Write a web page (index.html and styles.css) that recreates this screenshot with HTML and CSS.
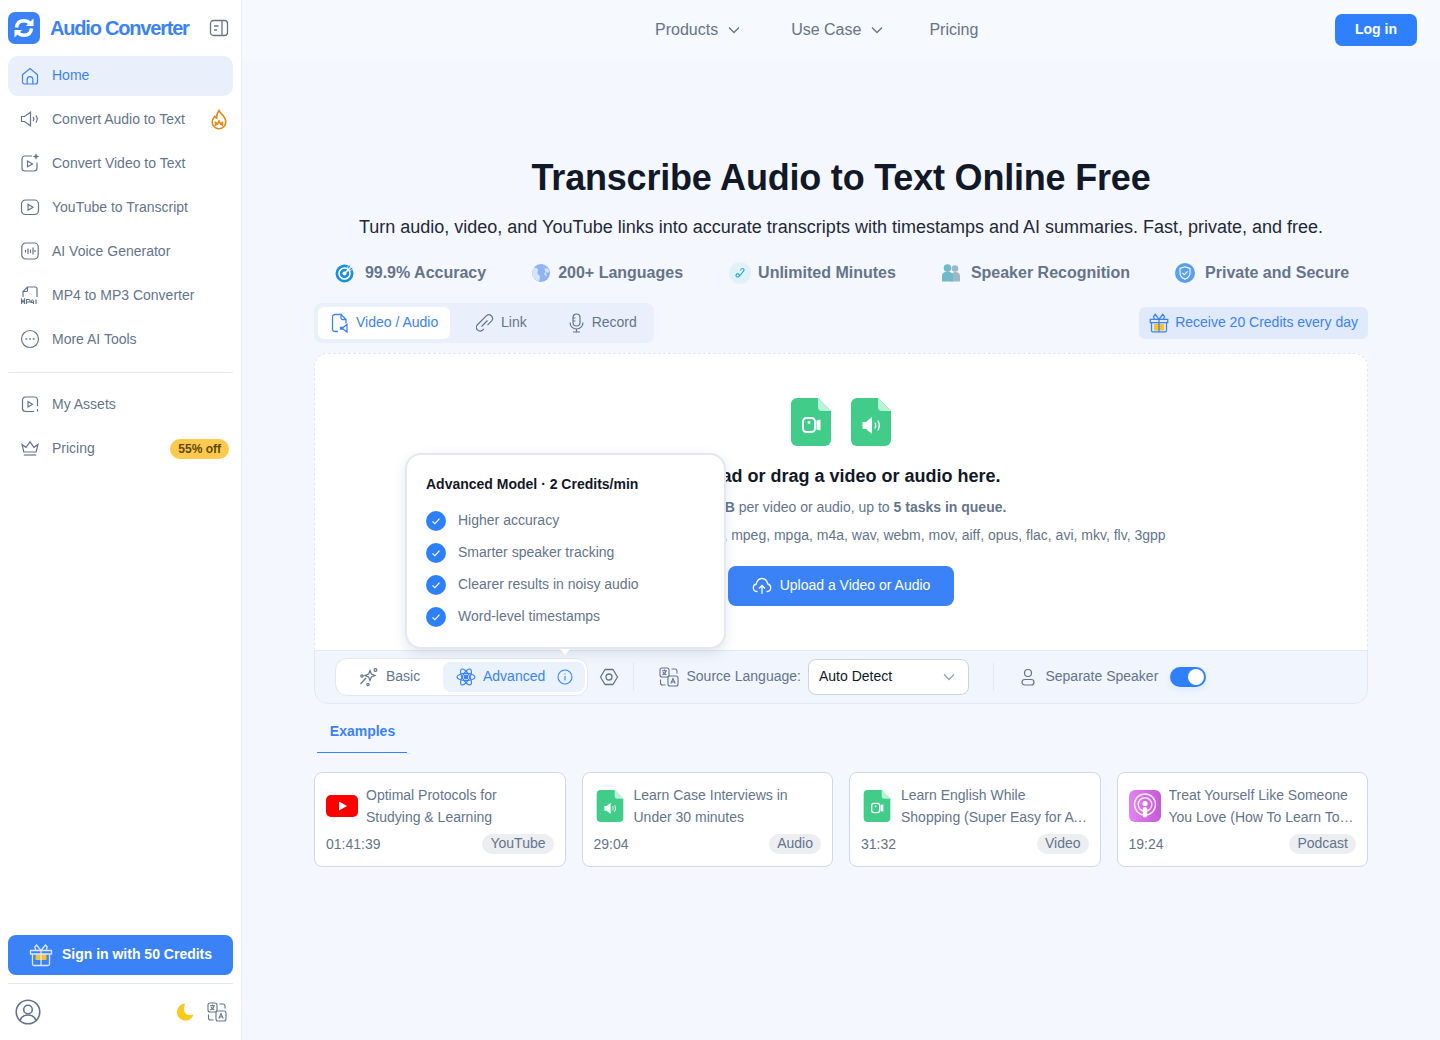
FILE: index.html
```html
<!DOCTYPE html>
<html lang="en">
<head>
<meta charset="utf-8">
<title>Audio Converter</title>
<link rel="stylesheet" href="styles.css">
</head>
<body>
<div class="app">
  <aside class="sidebar">
    <div class="brand">
      <span class="logo">
        <svg width="32" height="32" viewBox="0 0 32 32" fill="none"><path d="M8.500 15.500C9 11 12 8.700 16 8.700c2.600 0 4.600 1 6 2.600" stroke="#fff" stroke-width="3.400"/><path d="M25.500 6.500v7.600h-7.600z" fill="#fff"/><path d="M23.500 16.500C23 21 20 23.300 16 23.300c-2.600 0-4.600-1-6-2.600" stroke="#fff" stroke-width="3.400"/><path d="M6.500 25.500v-7.600h7.600z" fill="#fff"/></svg>
      </span>
      <span class="brand-name">Audio Converter</span>
      <svg class="collapse" width="20" height="20" viewBox="0 0 20 20" fill="none" stroke="#64748b" stroke-width="1.300"><rect x="1.500" y="2.500" width="17" height="15" rx="3"/><path d="M13 2.500v15M5 8h4.500M5 12h3"/></svg>
    </div>
    <nav class="nav nav-main">
      <a class="nav-item active"><svg class="nav-icon" viewBox="0 0 20 20" fill="none" stroke="currentColor" stroke-width="1.200"><path d="M2.500 8.800 10 2.600l7.500 6.200v7.200a2 2 0 0 1-2 2h-11a2 2 0 0 1-2-2z"/><path d="M7.200 18v-4.500a2.800 2.800 0 0 1 5.600 0V18"/></svg><span class="lift">Home</span></a>
      <a class="nav-item"><svg class="nav-icon" viewBox="0 0 20 20" fill="none" stroke="currentColor" stroke-width="1.200"><path d="M1.500 7.500h3L10.500 3.200v13.600L4.500 12.500h-3z"/><path d="M13 8a3 3 0 0 1 0 4M15.800 6.500a5.500 5.500 0 0 1 0 7"/></svg><span class="grow">Convert Audio to Text</span><svg class="badge-fire" width="20" height="22" viewBox="0 0 20 22" fill="none" stroke="#e08a1e" stroke-width="1.600"><path d="M10 1.500c1 3 6.800 5.800 6.800 11.500a6.800 6.800 0 0 1-13.600 0c0-3 1.600-4.500 2.600-5.700.5 1.200 1 1.700 1.800 2C7.500 6.500 8.500 3.500 10 1.500z"/><path d="M6.500 17v-3.500l2 1.500 1.500-3 1.500 3 2-1.500V17"/></svg></a>
      <a class="nav-item"><svg class="nav-icon" viewBox="0 0 20 20" fill="none" stroke="currentColor" stroke-width="1.200"><path d="M12 3H5a3 3 0 0 0-3 3v9a3 3 0 0 0 3 3h9a3 3 0 0 0 3-3V9.500"/><path d="M7.500 8v5.800l5-2.900z"/><path d="M16 0l.9 2.600 2.600.9-2.600.9-.9 2.600-.9-2.600-2.600-.9 2.600-.9z" fill="currentColor" stroke="none"/></svg><span>Convert Video to Text</span></a>
      <a class="nav-item"><svg class="nav-icon" viewBox="0 0 20 20" fill="none" stroke="currentColor" stroke-width="1.200"><rect x="1.500" y="3" width="17" height="14.500" rx="4"/><path d="M8 7.300v6l5-3z"/></svg><span>YouTube to Transcript</span></a>
      <a class="nav-item"><svg class="nav-icon" viewBox="0 0 20 20" fill="none" stroke="currentColor" stroke-width="1.200"><rect x="1.800" y="2" width="16.400" height="16" rx="4"/><path d="M5.500 9v2.500M8 7.500v5.500M10.500 8.500v3.500M13 6.500v7M15 9v2"/></svg><span>AI Voice Generator</span></a>
      <a class="nav-item"><svg class="nav-icon" viewBox="0 0 20 20" fill="none" stroke="currentColor" stroke-width="1.200"><path d="M3 12V6.500L7.500 2H15a2 2 0 0 1 2 2v8"/><path d="M3 6.500h3.500a1 1 0 0 0 1-1V2"/><path d="M1.500 19v-4.500l1.500 2.500 1.500-2.500V19M6.500 19v-4.500h2.300a1.200 1.200 0 0 1 0 2.500H6.500M12.500 14.500 11 17.500h3M13.500 15.500V19M16 14.500V19"/></svg><span>MP4 to MP3 Converter</span></a>
      <a class="nav-item"><svg class="nav-icon" viewBox="0 0 20 20" fill="none" stroke="currentColor" stroke-width="1.200"><circle cx="10" cy="10" r="8.500"/><path d="M6 10h.6M9.700 10h.6M13.400 10h.6" stroke-width="1.600" stroke-linecap="round"/></svg><span>More AI Tools</span></a>
    </nav>
    <div class="rule"></div>
    <nav class="nav">
      <a class="nav-item"><svg class="nav-icon" viewBox="0 0 20 20" fill="none" stroke="currentColor" stroke-width="1.200"><path d="M17.500 12V6a3 3 0 0 0-3-3h-9a3 3 0 0 0-3 3v8.500a3 3 0 0 0 3 3H14"/><path d="M8 7.500v5.500l4.500-2.700z"/><path d="M17.500 15v2.500"/></svg><span>My Assets</span></a>
      <a class="nav-item"><svg class="nav-icon" viewBox="0 0 20 20" fill="none" stroke="currentColor" stroke-width="1.200"><path d="M2 6.500l4 2.800L10 3.800l4 5.500 4-2.800-1.800 7.500H3.800z"/><path d="M3.800 17h12.400"/></svg><span class="grow">Pricing</span><span class="off">55% off</span></a>
    </nav>
    <div class="spacer"></div>
    <button class="signin">
      <svg width="24" height="24" viewBox="0 0 24 24" fill="none" stroke="#dbe8ff" stroke-width="1.300"><rect x="6.500" y="11" width="11" height="6" fill="#f4c430" stroke="none"/><path d="M1.500 7.500h21v3.500h-21zM3.500 11v10a1.500 1.500 0 0 0 1.500 1.500h14a1.500 1.500 0 0 0 1.500-1.500V11M12 7.500v15M12 7.500 7.500 2 5.800 4l1 3.500M12 7.500 16.500 2l1.700 2-1 3.500"/></svg>
      <span class="lift">Sign in with 50 Credits</span>
    </button>
    <div class="rule rule-bottom"></div>
    <div class="side-foot">
      <svg width="26" height="26" viewBox="0 0 26 26" fill="none" stroke="#64748b" stroke-width="1.600"><circle cx="13" cy="13" r="11.800"/><circle cx="13" cy="10.500" r="4.300"/><path d="M5 22c1-4 4-6 8-6s7 2 8 6"/></svg>
      <span class="grow"></span>
      <svg class="moon" width="18" height="18" viewBox="0 0 18 18"><path d="M9.500.6a8.500 8.500 0 1 0 8 11c-3 1.600-7.300.6-8.800-2.500C7.400 6.200 8 3 9.500.6z" fill="#fdc91c"/></svg>
      <svg width="20" height="20" viewBox="0 0 20 20" fill="none" stroke="#64748b" stroke-width="1.100"><rect x="1" y="1" width="9" height="9" rx="2"/><rect x="9" y="9" width="10" height="10" rx="2" fill="#fff"/><path d="M3 3.800h5M5.500 2.600v1.200M7 3.800c-.4 1.800-2 3.500-3.700 4M4 5c.6 1.300 2 2.600 3.400 2.800M11.800 16.500 14 11.500l2.200 5M12.600 15h2.800M12.500 2H16a2 2 0 0 1 2 2v2.500M1.500 12.500V16a2 2 0 0 0 2 2h3"/></svg>
    </div>
  </aside>

  <div class="main">
    <header class="topbar">
      <div class="topnav">
        <a class="topnav-item topnav-first">Products<svg width="14" height="14" viewBox="0 0 14 14" fill="none" stroke="#64748b" stroke-width="1.300"><path d="M2 4.500l5 5 5-5"/></svg></a>
        <a class="topnav-item topnav-second">Use Case<svg width="14" height="14" viewBox="0 0 14 14" fill="none" stroke="#64748b" stroke-width="1.300"><path d="M2 4.500l5 5 5-5"/></svg></a>
        <a class="topnav-item">Pricing</a>
      </div>
      <button class="login">Log in</button>
    </header>

    <main class="content">
      <h1 class="title">Transcribe Audio to Text Online Free</h1>
      <p class="subtitle">Turn audio, video, and YouTube links into accurate transcripts with timestamps and AI summaries. Fast, private, and free.</p>
      <ul class="features">
        <li class="feature feature-wide"><svg width="20" height="20" viewBox="0 0 20 20" fill="none"><circle cx="9.500" cy="10.500" r="9" fill="#1a8fe0"/><circle cx="9.500" cy="10.500" r="5.500" stroke="#fff" stroke-width="1.600"/><circle cx="9.500" cy="10.500" r="2" fill="#fff"/><path d="M15 1.500l.5 2.800 2.800.5L16 7.500l-3-.7-.5-3z" fill="#1a8fe0" stroke="#f4f7fd" stroke-width=".8"/><path d="M9.500 10.500 15.500 4.500" stroke="#fff" stroke-width="1.600"/></svg><span>99.9% Accuracy</span></li>
        <li class="feature"><svg width="18" height="18" viewBox="0 0 18 18"><circle cx="9" cy="9" r="9" fill="#8db4f5"/><path d="M1.500 4c2-.5 4 0 4.500 1.500S5 8 5.500 9.500 8 11 8 13s-1 3.500-1.500 4.500C3 16 .2 13 .2 9c0-2 .3-3.500 1.300-5zM11 .5c1 1 0 2.500 1 3.500s3 0 4 1 1.500 3 .5 3.500-3-.5-4 .5 1 3 2.500 3.500" fill="#f4f7fd" fill-opacity=".7"/></svg><span>200+ Languages</span></li>
        <li class="feature feature-mid"><svg width="22" height="22" viewBox="0 0 22 22" fill="none"><circle cx="11" cy="11" r="11" fill="#e2f1f8"/><path d="M13.500 6.500c1.200 0 2 1.300 1.200 2.500l-4.500 5.300c-1 1.200-3 .8-3.200-.6-.2-1.400 1.200-2.400 2.400-1.800 1 .4 1.100 1.600 1 2.600M13.500 6.500c-1 0-1.800.8-2 2" stroke="#2ab0c8" stroke-width="1.200"/></svg><span>Unlimited Minutes</span></li>
        <li class="feature feature-wide feature-tight"><svg width="20" height="20" viewBox="0 0 20 20"><circle cx="14" cy="5.500" r="3.300" fill="#9bb9c4"/><path d="M10 18.500V13c0-2.500 2-4 4.500-4s4.500 1.500 4.500 4v5.500z" fill="#9bb9c4"/><circle cx="6.500" cy="5" r="3.800" fill="#6fb9ca"/><path d="M1 18.500V13c0-3 2.500-4.500 5.500-4.500S12 10 12 13v5.500z" fill="#6fb9ca"/></svg><span>Speaker Recognition</span></li>
        <li class="feature feature-wide feature-tight"><svg width="20" height="20" viewBox="0 0 20 20" fill="none"><circle cx="10" cy="10" r="10" fill="#5b9ff2"/><path d="M10 3.800 15 5.500v4.500c0 3-2.300 5-5 6.200-2.700-1.200-5-3.200-5-6.200V5.500z" stroke="#fff" stroke-width="1.100"/><path d="M7.500 10l1.800 1.800 3.200-3.400" stroke="#fff" stroke-width="1.100"/></svg><span>Private and Secure</span></li>
      </ul>

      <div class="tabs-row">
        <div class="tabs">
          <a class="tab tab-active"><svg width="18" height="20" viewBox="0 0 18 20" fill="none" stroke="#3b82f6" stroke-width="1.300"><path d="M7 18.500H4a2.500 2.500 0 0 1-2.500-2.500V4A2.500 2.500 0 0 1 4 1.500h6L15 6.500v4"/><path d="M10 1.500V5a1.500 1.500 0 0 0 1.500 1.500H15"/><path d="M9.500 14.500H12l4-3v7.500l-4-3H9.500z"/></svg><span class="lift">Video / Audio</span></a>
          <a class="tab"><svg width="18" height="18" viewBox="0 0 18 18" fill="none" stroke="#64748b" stroke-width="1.200"><path d="M7.800 14.800l-1.400 1.400a3.700 3.700 0 0 1-5.200-5.200l9.300-9.300a3.700 3.700 0 0 1 5.200 5.200l-4.200 4.200"/><path d="M5.500 12.500l6-6"/></svg><span class="lift">Link</span></a>
          <a class="tab"><svg width="17" height="20" viewBox="0 0 16 20" fill="none" stroke="#64748b" stroke-width="1.200"><rect x="4.500" y="1" width="7" height="12" rx="3.500"/><path d="M1.500 9.500a6.500 6.500 0 0 0 13 0M8 16v3M4.500 19h7M4.500 5H7M4.500 8H7"/></svg><span class="lift">Record</span></a>
        </div>
        <a class="receive"><svg width="20" height="20" viewBox="0 0 24 24" fill="none" stroke="#3b82f6" stroke-width="1.500"><rect x="6" y="13" width="12" height="8" fill="#f4c430" stroke="none"/><path d="M1.500 7.500h21v4h-21zM3 11.500V21a1.500 1.500 0 0 0 1.500 1.500h15A1.500 1.500 0 0 0 21 21v-9.500M12 7.500v15M12 7.500 7.500 1.500 5.500 4l1 3.500M12 7.500l4.500-6 2 2.500-1 3.500"/></svg><span class="lift">Receive 20 Credits every day</span></a>
      </div>

      <section class="panel">
        <div class="drop">
          <div class="file-icons">
            <svg width="40" height="48" viewBox="0 0 40 48"><path d="M6 0h21l13 13v29a6 6 0 0 1-6 6H6a6 6 0 0 1-6-6V6a6 6 0 0 1 6-6z" fill="#41cc89"/><path d="M27 0l13 13h-9a4 4 0 0 1-4-4z" fill="#b9f2d7"/><rect x="12" y="20" width="12" height="14" rx="3.500" fill="none" stroke="#fff" stroke-width="2"/><path d="M25.500 22.500l4-1v11l-4-1z" fill="#fff"/><circle cx="18" cy="24.500" r="1.400" fill="#fff"/></svg>
            <svg width="40" height="48" viewBox="0 0 40 48"><path d="M6 0h21l13 13v29a6 6 0 0 1-6 6H6a6 6 0 0 1-6-6V6a6 6 0 0 1 6-6z" fill="#41cc89"/><path d="M27 0l13 13h-9a4 4 0 0 1-4-4z" fill="#b9f2d7"/><path d="M11.500 24h3.500l6-5v17l-6-5h-3.500z" fill="#fff"/><path d="M24 24.500c1 2 1 4 0 6M26.800 22.500c1.800 3 1.800 7 0 10" fill="none" stroke="#fff" stroke-width="1.300"/></svg>
          </div>
          <h2 class="drop-title">Upload or drag a video or audio here.</h2>
          <p class="drop-limit">Max <b>2GB</b> per video or audio, up to <b>5 tasks in queue.</b></p>
          <p class="drop-formats">Supported file formats: mp3, mp4, mpeg, mpga, m4a, wav, webm, mov, aiff, opus, flac, avi, mkv, flv, 3gpp</p>
          <button class="upload"><svg width="20" height="18" viewBox="0 0 20 18" fill="none" stroke="#fff" stroke-width="1.300"><path d="M5.500 14.500H4.800a3.800 3.800 0 0 1-.5-7.500C5 3.500 7.500 1.500 10 1.500s5 2 5.700 5.500a3.800 3.800 0 0 1-.5 7.500h-.7"/><path d="M10 17V9M7 11.500 10 8.500l3 3"/></svg><span class="lift">Upload a Video or Audio</span></button>
        </div>
        <div class="options">
          <div class="seg">
            <a class="seg-item"><svg width="20" height="20" viewBox="0 0 20 20" fill="none" stroke="#64748b" stroke-width="1.200"><path d="M11 3.500l1.400 3.600 3.600 1.400-3.600 1.400L11 13.500 9.600 9.900 6 8.500l3.600-1.400z"/><path d="M7 11 1.500 17"/><circle cx="16.500" cy="3" r="1.400"/><circle cx="3" cy="9" r="1.200"/><circle cx="9" cy="17.500" r="1.200"/></svg><span class="lift">Basic</span></a>
            <a class="seg-item seg-active"><svg width="20" height="20" viewBox="0 0 20 20" fill="none" stroke="#3b82f6" stroke-width="1.200"><ellipse cx="10" cy="10" rx="9" ry="3.600"/><ellipse cx="10" cy="10" rx="9" ry="3.600" transform="rotate(60 10 10)"/><ellipse cx="10" cy="10" rx="9" ry="3.600" transform="rotate(120 10 10)"/><circle cx="10" cy="10" r="1.800" fill="#3b82f6"/></svg><span class="grow lift">Advanced</span><svg width="16" height="16" viewBox="0 0 16 16" fill="none" stroke="#3b82f6" stroke-width="1.100"><circle cx="8" cy="8" r="7"/><path d="M8 7v4.500M8 4.500v1"/></svg></a>
          </div>
          <svg class="gear" width="20" height="20" viewBox="0 0 20 20" fill="none" stroke="#64748b" stroke-width="1.300"><path d="M6 2.500h8L18.500 10 14 17.500H6L1.500 10z" stroke-linejoin="round"/><circle cx="10" cy="10" r="3"/></svg>
          <span class="vline"></span>
          <svg class="lang-icon" width="20" height="20" viewBox="0 0 20 20" fill="none" stroke="#64748b" stroke-width="1.100"><rect x="1" y="1" width="9" height="9" rx="2"/><rect x="9" y="9" width="10" height="10" rx="2" fill="#f1f5fd"/><path d="M3 3.800h5M5.500 2.600v1.200M7 3.800c-.4 1.800-2 3.500-3.700 4M4 5c.6 1.300 2 2.600 3.400 2.800M11.800 16.500 14 11.500l2.200 5M12.600 15h2.800M12.500 2H16a2 2 0 0 1 2 2v2.500M1.500 12.500V16a2 2 0 0 0 2 2h3"/></svg>
          <span class="opt-label lift">Source Language:</span>
          <div class="select"><span class="grow lift">Auto Detect</span><svg width="14" height="14" viewBox="0 0 14 14" fill="none" stroke="#94a3b8" stroke-width="1.300"><path d="M2 4.500l5 5 5-5"/></svg></div>
          <span class="vline vline-2"></span>
          <svg class="person" width="16" height="18" viewBox="0 0 16 18" fill="none" stroke="#64748b" stroke-width="1.200"><circle cx="8" cy="5" r="3.500"/><rect x="2" y="11.500" width="12" height="5.500" rx="2.750"/></svg>
          <span class="opt-label lift">Separate Speaker</span>
          <span class="toggle"><span class="knob"></span></span>
        </div>
      </section>

      <div class="ex-tabs"><a class="ex-tab">Examples</a></div>

      <div class="examples">
        <article class="ex-card">
          <div class="ex-top">
            <svg class="ex-icon" width="32" height="32" viewBox="0 0 32 32"><rect y="5" width="32" height="22" rx="5" fill="#f00"/><path d="M13 11.500v9l8-4.500z" fill="#fff"/></svg>
            <div class="ex-title"><span class="ex-line">Optimal Protocols for</span><span class="ex-line">Studying &amp; Learning</span></div>
          </div>
          <div class="ex-bottom"><span class="ex-time">01:41:39</span><span class="pill">YouTube</span></div>
        </article>
        <article class="ex-card">
          <div class="ex-top">
            <svg class="ex-icon" width="32" height="32" viewBox="-3 0 46 48"><path d="M6 0h21l13 13v29a6 6 0 0 1-6 6H6a6 6 0 0 1-6-6V6a6 6 0 0 1 6-6z" fill="#41cc89"/><path d="M27 0l13 13h-9a4 4 0 0 1-4-4z" fill="#b9f2d7"/><path d="M11.500 24h3.500l6-5v17l-6-5h-3.500z" fill="#fff"/><path d="M24 24.500c1 2 1 4 0 6M26.800 22.500c1.800 3 1.800 7 0 10" fill="none" stroke="#fff" stroke-width="1.300"/></svg>
            <div class="ex-title"><span class="ex-line">Learn Case Interviews in</span><span class="ex-line">Under 30 minutes</span></div>
          </div>
          <div class="ex-bottom"><span class="ex-time">29:04</span><span class="pill">Audio</span></div>
        </article>
        <article class="ex-card">
          <div class="ex-top">
            <svg class="ex-icon" width="32" height="32" viewBox="-3 0 46 48"><path d="M6 0h21l13 13v29a6 6 0 0 1-6 6H6a6 6 0 0 1-6-6V6a6 6 0 0 1 6-6z" fill="#41cc89"/><path d="M27 0l13 13h-9a4 4 0 0 1-4-4z" fill="#b9f2d7"/><rect x="12" y="20" width="12" height="14" rx="3.500" fill="none" stroke="#fff" stroke-width="2"/><path d="M25.500 22.500l4-1v11l-4-1z" fill="#fff"/><circle cx="18" cy="24.500" r="1.400" fill="#fff"/></svg>
            <div class="ex-title"><span class="ex-line">Learn English While</span><span class="ex-line">Shopping (Super Easy for A Beginners)</span></div>
          </div>
          <div class="ex-bottom"><span class="ex-time">31:32</span><span class="pill">Video</span></div>
        </article>
        <article class="ex-card">
          <div class="ex-top">
            <svg class="ex-icon" width="32" height="32" viewBox="0 0 32 32" fill="none"><defs><linearGradient id="pod" x1="0" x2="1" y1="0" y2="0"><stop offset="0" stop-color="#e184ee"/><stop offset="1" stop-color="#c65ad8"/></linearGradient></defs><rect width="32" height="32" rx="6" fill="url(#pod)"/><circle cx="16" cy="14.500" r="10.500" stroke="#fff" stroke-opacity=".85" stroke-width="1.500"/><circle cx="16" cy="14.500" r="6.800" stroke="#fff" stroke-opacity=".85" stroke-width="1.500"/><circle cx="16" cy="13.500" r="2.600" fill="#fff"/><rect x="13.800" y="17" width="4.400" height="10.500" rx="2.200" fill="#fff"/></svg>
            <div class="ex-title"><span class="ex-line">Treat Yourself Like Someone</span><span class="ex-line">You Love (How To Learn To Love Yourself)</span></div>
          </div>
          <div class="ex-bottom"><span class="ex-time">19:24</span><span class="pill">Podcast</span></div>
        </article>
      </div>
    </main>

    <div class="popover">
      <div class="pop-title">Advanced Model · 2 Credits/min</div>
      <ul class="pop-list">
        <li class="pop-item"><svg width="20" height="20" viewBox="0 0 20 20" fill="none"><circle cx="10" cy="10" r="10" fill="#2f80ff"/><path d="M6.500 10.300l2.400 2.300 4.600-5" stroke="#fff" stroke-width="1.100"/></svg><span class="lift">Higher accuracy</span></li>
        <li class="pop-item"><svg width="20" height="20" viewBox="0 0 20 20" fill="none"><circle cx="10" cy="10" r="10" fill="#2f80ff"/><path d="M6.500 10.300l2.400 2.300 4.600-5" stroke="#fff" stroke-width="1.100"/></svg><span class="lift">Smarter speaker tracking</span></li>
        <li class="pop-item"><svg width="20" height="20" viewBox="0 0 20 20" fill="none"><circle cx="10" cy="10" r="10" fill="#2f80ff"/><path d="M6.500 10.300l2.400 2.300 4.600-5" stroke="#fff" stroke-width="1.100"/></svg><span class="lift">Clearer results in noisy audio</span></li>
        <li class="pop-item"><svg width="20" height="20" viewBox="0 0 20 20" fill="none"><circle cx="10" cy="10" r="10" fill="#2f80ff"/><path d="M6.500 10.300l2.400 2.300 4.600-5" stroke="#fff" stroke-width="1.100"/></svg><span class="lift">Word-level timestamps</span></li>
      </ul>
      <span class="pop-arrow"></span>
    </div>
  </div>
</div>
</body>
</html>
```
FILE: styles.css
```css
* { box-sizing: border-box; }
html, body { margin: 0; height: 100%; }
body {
  font-family: "Liberation Sans", Arial, sans-serif;
  font-size: 14px;
  color: #64748b;
  background: #f4f7fd;
  overflow: hidden;
}
p, h1, h2, ul { margin: 0; padding: 0; }
ul { list-style: none; }
button { font-family: inherit; border: 0; cursor: pointer; }
svg { flex: none; display: block; }
.grow { flex: 1; min-width: 0; }
.lift { padding-bottom: 2px; }

.app { display: flex; height: 1040px; }

/* Sidebar */
.sidebar {
  width: 242px;
  flex: none;
  display: flex;
  flex-direction: column;
  background: #fff;
  border-right: 1px solid #e8edf6;
  padding: 12px 8px 0;
}
.brand { display: flex; align-items: center; height: 32px; margin-bottom: 12px; }
.logo { width: 32px; height: 32px; border-radius: 7px; background: #3b82f6; flex: none; }
.brand-name {
  margin-left: 10px;
  flex: 1;
  font-size: 20px;
  font-weight: 700;
  letter-spacing: -1.2px;
  color: #3b82f6;
}
.collapse { margin-right: 4px; }
.nav { display: flex; flex-direction: column; gap: 4px; }
.nav-item {
  display: flex;
  align-items: center;
  height: 40px;
  padding: 0 4px 0 12px;
  border-radius: 10px;
  color: #64748b;
}
.nav-main .nav-item:not(.active) { padding-bottom: 2px; }
.nav-item.active { background: #e9f0fc; color: #3b82f6; }
.nav-icon { width: 20px; height: 20px; margin-right: 12px; }
.badge-fire { margin-top: 2px; }
.off {
  background: #ffc94d;
  color: #5c4a12;
  font-size: 12px;
  font-weight: 700;
  line-height: 20px;
  height: 20px;
  margin-top: 2px;
  padding: 0 8px;
  border-radius: 10px;
}
.rule { height: 1px; background: #e2e8f0; margin: 12px 0 11px; }
.spacer { flex: 1; }
.signin {
  display: flex;
  align-items: center;
  justify-content: center;
  gap: 9px;
  height: 40px;
  border-radius: 8px;
  background: #3b82f6;
  color: #fff;
  font-size: 14px;
  font-weight: 700;
  flex: none;
}
.rule-bottom { margin: 8px 0 0; }
.side-foot {
  display: flex;
  align-items: center;
  gap: 13px;
  height: 56px;
  padding: 0 6px 0 7px;
  flex: none;
}

/* Main */
.main { flex: 1; min-width: 0; position: relative; }
.topbar {
  height: 60px;
  background: #f6f9fe;
  display: flex;
  align-items: center;
  justify-content: flex-end;
  padding-right: 23px;
  position: relative;
}
.topnav {
  position: absolute;
  left: 413px;
  top: 0;
  height: 60px;
  display: flex;
  align-items: center;
  gap: 38px;
}
.topnav-item { display: flex; align-items: center; gap: 9px; font-size: 16px; color: #64748b; }
.topnav-first { margin-right: 12px; }
.topnav-second { margin-right: 7px; }
.login {
  width: 82px;
  height: 32px;
  padding: 0 0 2px;
  border-radius: 7px;
  background: #2f80ff;
  color: #fff;
  font-size: 14px;
  font-weight: 700;
}
.content { width: 1054px; margin: 0 auto; display: flex; flex-direction: column; }
.title {
  margin-top: 95px;
  text-align: center;
  font-size: 36px;
  line-height: 46px;
  font-weight: 700;
  letter-spacing: -0.2px;
  color: #111827;
}
.subtitle {
  margin-top: 14px;
  text-align: center;
  font-size: 18px;
  line-height: 24px;
  color: #1f2937;
}
.features {
  margin-top: 22px;
  height: 24px;
  padding-left: 2px;
  display: flex;
  justify-content: center;
  align-items: center;
  gap: 46px;
}
.feature {
  display: flex;
  align-items: center;
  gap: 8px;
  font-size: 16px;
  font-weight: 700;
  color: #64748b;
}
.feature-wide { gap: 10px; }
.feature-mid { gap: 7px; }
.feature-tight { margin-left: -1px; }

.tabs-row {
  margin-top: 18px;
  height: 40px;
  display: flex;
  align-items: center;
  justify-content: space-between;
}
.tabs {
  height: 40px;
  width: 340px;
  padding: 4px;
  display: flex;
  background: #e9f0fc;
  border-radius: 8px;
}
.tab {
  flex: none;
  display: flex;
  align-items: center;
  gap: 7px;
  padding: 0 15px 0 26px;
  height: 32px;
  border-radius: 6px;
  color: #64748b;
}
.tab-active { width: 132px; background: #fff; color: #3b82f6; padding: 0 0 0 13px; }
.receive {
  width: 229px;
  height: 32px;
  padding: 0 10px;
  display: flex;
  align-items: center;
  justify-content: space-between;
  border-radius: 6px;
  background: #e0eafb;
  color: #3b82f6;
}

.panel {
  margin-top: 10px;
  height: 351px;
  background: #fff;
  border-radius: 14px;
  display: flex;
  flex-direction: column;
}
.drop {
  flex: 1;
  display: flex;
  flex-direction: column;
  align-items: center;
  padding-top: 44px;
  border: 1px dashed #e2e8f0;
  border-bottom: 0;
  border-radius: 14px 14px 0 0;
}
.file-icons { display: flex; gap: 20px; }
.drop-title { margin-top: 18px; font-size: 18px; line-height: 24px; font-weight: 700; color: #111827; }
.drop-limit { margin-top: 8px; line-height: 22px; }
.drop-formats { margin-top: 6px; line-height: 22px; }
.upload {
  margin-top: 20px;
  width: 226px;
  height: 40px;
  border-radius: 8px;
  background: #3b82f6;
  color: #fff;
  font-size: 14px;
  display: flex;
  align-items: center;
  justify-content: center;
  gap: 8px;
}
.options {
  height: 54px;
  flex: none;
  background: #f1f5fd;
  border: 1px solid #e2e8f0;
  border-radius: 0 0 14px 14px;
  display: flex;
  align-items: center;
  padding-left: 20px;
}
.seg {
  width: 253px;
  height: 38px;
  flex: none;
  background: #fff;
  border: 1px solid #e2e8f0;
  border-radius: 12px;
  padding: 3px 2px 3px 3px;
  display: flex;
}
.seg-item { width: 104px; display: flex; align-items: center; gap: 7px; padding: 0 0 0 20px; height: 30px; flex: none; }
.seg-active {
  flex: 1;
  padding: 0 12px 0 13px;
  background: #eaf2fe;
  border-radius: 8px;
  color: #3b82f6;
}
.gear { margin-left: 11px; }
.vline { width: 1px; height: 28px; background: #e2e8f0; margin: 0 15px 0 14px; }
.lang-icon { margin: 0 7.5px 0 10px; }
.select {
  width: 161px;
  height: 36px;
  margin-left: 7px;
  background: #fff;
  border: 1px solid #cbd5e1;
  border-radius: 8px;
  padding: 0 12px 0 10px;
  display: flex;
  align-items: center;
  color: #111827;
}
.vline-2 { margin: 0 0 0 24px; }
.person { margin: 0 9.5px 0 26px; }
.toggle {
  width: 36px;
  height: 20px;
  margin-left: 12px;
  border-radius: 10px;
  background: #2f80ff;
  display: flex;
  align-items: center;
  justify-content: flex-end;
  padding-right: 2px;
  box-shadow: 0 2px 6px rgba(47, 128, 255, .12);
}
.knob { width: 16px; height: 16px; border-radius: 50%; background: #fff; }

.ex-tabs { margin-top: 6px; height: 43px; display: flex; }
.ex-tabs::after { content: ""; width: 4px; height: 43px; border-bottom: 1px solid #e2e8f0; }
.ex-tab {
  margin-left: 3px;
  width: 90px;
  height: 43px;
  line-height: 43px;
  padding-left: 1px;
  text-align: center;
  font-weight: 700;
  color: #3b82f6;
  border-bottom: 1px solid #3b82f6;
}
.examples {
  margin-top: 19px;
  display: grid;
  grid-template-columns: repeat(4, minmax(0, 1fr));
  gap: 16px;
}
.ex-card {
  height: 95px;
  min-width: 0;
  background: #fff;
  border: 1px solid #cfd8e8;
  border-radius: 8px;
  padding: 11px 11px 0;
  display: flex;
  flex-direction: column;
}
.ex-top { display: flex; gap: 8px; align-items: center; height: 44px; }
.ex-title { flex: 1; min-width: 0; }
.ex-line {
  display: block;
  line-height: 22px;
  white-space: nowrap;
  overflow: hidden;
  text-overflow: ellipsis;
}
.ex-bottom { margin-top: 6px; display: flex; align-items: center; justify-content: space-between; }
.pill {
  height: 20px;
  line-height: 18px;
  padding: 0 8px;
  border-radius: 10px;
  background: #eceef1;
}

/* Popover */
.popover {
  position: absolute;
  left: 163px;
  top: 453px;
  width: 321px;
  height: 196px;
  background: #fff;
  border: 2px solid #e2e8f0;
  border-radius: 16px;
  padding: 19px 19px;
  box-shadow: 0 4px 12px rgba(100, 116, 139, .18);
}
.pop-title { font-weight: 700; color: #111827; line-height: 20px; }
.pop-list { margin-top: 17px; display: flex; flex-direction: column; gap: 12px; }
.pop-item { display: flex; align-items: center; gap: 12px; height: 20px; }
.pop-arrow {
  position: absolute;
  left: 153px;
  bottom: -8px;
  width: 0;
  height: 0;
  border-left: 5px solid transparent;
  border-right: 5px solid transparent;
  border-top: 6px solid #fff;
}
```
